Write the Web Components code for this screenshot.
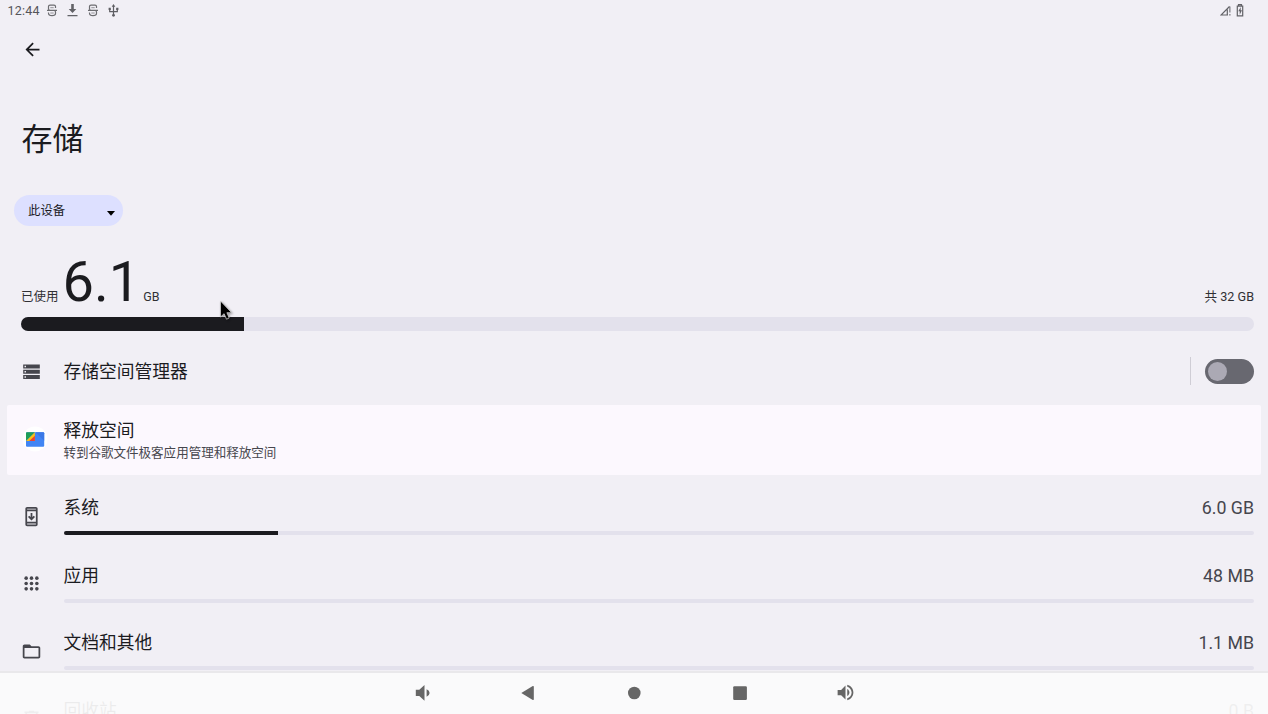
<!DOCTYPE html>
<html lang="zh-CN">
<head>
<meta charset="utf-8">
<title>存储</title>
<style>
html,body{margin:0;height:100%;overflow:hidden;background:#f1eff5}
body{font-family:Roboto,"Noto Sans CJK SC",sans-serif;color:#1b1b1f}
</style>
</head>
<body>
<storage-screen></storage-screen>
<script>
const ICONS = {
  storage: '<svg viewBox="0 0 24 24" width="21" height="21"><path d="M2.500 20.500h19v-4.600h-19v4.600zm1.500-3h1.700v1.700H4v-1.700zM2.500 4v4.600h19V4h-19zm3.200 3.200H4V5.500h1.700v1.700zM2.500 14.500h19V10h-19v4.500zM4 11.400h1.700v1.700H4v-1.700z"/></svg>',
  system: '<svg viewBox="0 0 24 24" width="21" height="21"><path d="M17 1.010L7 1c-1.100 0-2 .9-2 2v18c0 1.100.9 2 2 2h10c1.100 0 2-.9 2-2V3c0-1.100-.9-1.990-2-1.990zM17 21H7v-1h10v1zm0-3H7V6h10v12zM17 4H7V3h10v1zm-1 8.500l-4 4-4-4 1.410-1.410L11 12.670V8h2v4.670l1.590-1.580z"/></svg>',
  apps: '<svg viewBox="0 0 24 24" width="21" height="21"><g><circle cx="5.900" cy="5.900" r="2.050"/><circle cx="12" cy="5.900" r="2.050"/><circle cx="18.100" cy="5.900" r="2.050"/><circle cx="5.900" cy="12" r="2.050"/><circle cx="12" cy="12" r="2.050"/><circle cx="18.100" cy="12" r="2.050"/><circle cx="5.900" cy="18.100" r="2.050"/><circle cx="12" cy="18.100" r="2.050"/><circle cx="18.100" cy="18.100" r="2.050"/></g></svg>',
  folder: '<svg viewBox="0 0 24 24" width="21" height="21"><path d="M20 6h-8l-2-2H4c-1.100 0-1.990.9-1.990 2L2 18c0 1.100.9 2 2 2h16c1.100 0 2-.9 2-2V8c0-1.100-.9-2-2-2zm0 12H4V8h16v10z"/></svg>',
  trash: '<svg viewBox="0 0 24 24" width="21" height="21"><path d="M15 4V3H9v1H4v2h1v13c0 1.100.9 2 2 2h10c1.100 0 2-.9 2-2V6h1V4h-5zm2 15H7V6h10v13zM9 8h2v9H9V8zm4 0h2v9h-2V8z"/></svg>',
  files: '<svg viewBox="0 0 26 26" width="26" height="26"><circle cx="13" cy="13" r="12.500" fill="#fff"/><rect x="4" y="6.300" width="18.200" height="14.500" rx="1" fill="#4285f4"/><path d="M13.300 6.300H21.200q1 0 1 1v7.500z" fill="#3b78e7"/><path d="M4 14.800V7.300q0-1 1-1h8z" fill="#1e9e58"/><path d="M4.100 15 12.900 6.300V15z" fill="#fbc116"/><path d="M7.200 15l5.700-5.200V15z" fill="#e94335"/></svg>'
};
const define = (name, css, html) => customElements.define(name, class extends HTMLElement {
  constructor() {
    super();
    this.attachShadow({ mode: 'open' });
  }
  connectedCallback() {
    this.shadowRoot.innerHTML = `<style>:host{display:block;box-sizing:border-box}*{box-sizing:border-box}svg{display:block;flex:none}${css}</style>` +
      (typeof html === 'function' ? html(this) : html);
  }
});

define('ui-icon', ':host{display:block;fill:#46464d}', el => ICONS[el.getAttribute('name')]);

define('status-bar', `
:host{display:flex;height:22px;align-items:flex-start;padding:0 24.500px 0 7.500px;font-size:12.500px;color:#55555a;letter-spacing:.2px}
.left{display:flex;align-items:center;flex:1;height:21px}
.right{display:flex;gap:3.500px;height:20px;align-items:center}`, () => {
  const s = `<svg width="10" height="13" viewBox="0 0 10 13" fill="none" stroke="#6c6c70" stroke-width="1.200"><path d="M8.500 4V2.600Q8.500 1.100 7 1.100H3Q1.500 1.100 1.500 2.600V4.800Q1.500 6.300 3 6.300H7Q8.500 6.300 8.500 8V9.500Q8.500 11.700 5 11.700T1.500 9.300V8.500M0 6.300H10"/><path d="M3.300 3.700H6.700M3.300 9H6.700" stroke-width=".7"/></svg>`;
  return `<div class="left"><span style="width:39px">12:44</span>${s}
<svg style="margin-left:10px" width="11" height="13" viewBox="0 0 11 13" fill="#626267"><path d="M4.200 0h2.600v5H9.300L5.500 9 1.700 5H4.200zM.5 11h10v1.300H.5z"/></svg>
<span style="width:10px"></span>${s}
<svg style="margin-left:10px" width="11" height="13" viewBox="0 0 11 13"><path d="M5.500 2V11M1.700 5V7.600H5.500M9.300 4.500V7.600H5.500" fill="none" stroke="#5e5e63" stroke-width="1.200"/><path d="M5.500 0 7.300 2.700H3.700zM.6 3.800H2.800V6H.6zM8.200 3.800h2.200V6H8.200z" fill="#5e5e63"/><circle cx="5.500" cy="11.300" r="1.400" fill="#5e5e63"/></svg></div>
<div class="right"><svg width="12" height="13" viewBox="0 0 12 13" fill="none" stroke="#626267"><path d="M8 11H1L9.500 2.500M7.300 5.500V11" stroke-width="1.200"/><path d="M9.900 2.500V8.500M9.900 10V11.600" stroke-width="1"/></svg>
<svg width="8" height="13" viewBox="0 0 8 13"><path d="M2.500 1.600V.6h3v1M1.300 2.100H6.700V11.800H1.300z" fill="none" stroke="#626267" stroke-width="1.200"/><path d="M4.700 3 2.300 7.300H3.700V10.800L6 6.300H4.700z" fill="#626267"/></svg></div>`;
});

define('app-bar', ':host{display:flex;height:55px;align-items:center;padding-left:21.500px}',
  `<svg viewBox="0 0 24 24" width="21" height="21" fill="#1b1b1f"><path d="M20 11H7.830l5.590-5.590L12 4l-8 8 8 8 1.410-1.410L7.830 13H20v-2z"/></svg>`);

define('page-title', ':host{height:117.500px;padding:39px 0 0 21.500px;font-size:31px;line-height:48px}', '<slot></slot>');

define('device-picker', `
:host{display:flex;width:109px;height:31.500px;margin-left:14px;padding:0 8px 0 14px;border-radius:16px;background:#dde0ff;align-items:center;justify-content:space-between;font-size:12.400px;color:#1b1b1f}
svg{margin-top:6px}`, `<slot></slot><svg width="8" height="5" viewBox="0 0 8 5"><path d="M0 0H8L4 4.700z"/></svg>`);

define('usage-summary', `
:host{padding:24px 14px 0 21px;height:105px}
.line{display:flex;align-items:baseline;height:67px;line-height:64px;font-size:12.500px;color:#303034}
b{font-weight:400;font-size:56px;color:#1b1b1f;margin:0 3px 0 4px}
.total{margin-left:auto;font-size:12.600px}
.bar{height:14px;border-radius:7px;background:#e3e1ec;overflow:hidden}
.bar i{display:block;height:14px;width:223px;background:#1b1b1f}`,
`<div class="line"><span>已使用</span><b>6.1</b><span>GB</span><span class="total">共 32 GB</span></div><div class="bar"><i></i></div>`);

define('manager-row', `
:host{display:flex;align-items:center;height:74px;padding:6px 14px 0 21px;font-size:17.750px}
.t{margin:-2px 0 0 21.500px;flex:1}
.sep{width:1px;height:28px;background:#cfcdd5;margin-right:14px}
.switch{width:49px;height:25px;border-radius:13px;background:#686870;padding:3px}
.switch i{display:block;width:19px;height:19px;border-radius:50%;background:#aba9b4}`,
`<ui-icon name="storage"></ui-icon><span class="t"><slot></slot></span><span class="sep"></span><span class="switch"><i></i></span>`);

define('free-card', `
:host{display:flex;align-items:center;height:70px;margin:0 7px;padding-left:15px;background:#fcf8fe;border-radius:2px}
ui-icon{margin-top:-2px}
.text{margin:1px 0 0 15.500px}
.t{font-size:17.750px;line-height:24px}
.s{font-size:12.530px;line-height:19px;color:#46464d}`,
`<ui-icon name="files"></ui-icon><div class="text"><div class="t"><slot></slot></div><div class="s"><slot name="summary"></slot></div></div>`);

define('category-row', `
:host{display:flex;height:67.500px;padding:0 14px 0 21px}
ui-icon{margin-top:23.500px;height:21px}
.body{flex:1;margin-left:21.500px}
.line{display:flex;justify-content:space-between;font-size:17.750px;height:49px;line-height:26px;padding-top:13px}
.v{color:#46464d}
.bar{height:4px;border-radius:2px;background:#e3e1ec;overflow:hidden}
.bar i{display:block;height:4px;background:#1b1b1f}`,
el => `<ui-icon name="${el.getAttribute('icon')}"></ui-icon><div class="body"><div class="line"><span><slot></slot></span><span class="v">${el.getAttribute('value')}</span></div><div class="bar"><i style="width:${el.getAttribute('used') || 0}%"></i></div></div>`);

define('nav-bar', `
:host{position:absolute;left:0;right:0;bottom:0;height:43px;padding-bottom:1.500px;border-top:2px solid #e9e8eb;background:rgba(251,251,251,.935);display:flex;justify-content:center}
span{width:105.600px;display:flex;justify-content:center;align-items:center}
svg{fill:#666}`, `
<span><svg width="20" height="20" viewBox="0 0 20 20"><path d="M2.800 6.800H6.300L11.500 2V17.800L6.300 13H2.800zM13.600 6.200Q16.600 7.500 16.600 9.900T13.600 13.700z"/></svg></span>
<span><svg width="20" height="20" viewBox="0 0 20 20"><path d="M3.300 10 14.800 3.100Q15.800 2.600 15.800 3.700V16.300Q15.800 17.400 14.800 16.900z"/></svg></span>
<span><svg width="20" height="20" viewBox="0 0 20 20"><circle cx="10.300" cy="10" r="6.300"/></svg></span>
<span><svg width="20" height="20" viewBox="0 0 20 20"><rect x="3.200" y="3.200" width="13.700" height="13.700" rx="1.200"/></svg></span>
<span><svg width="21" height="21" viewBox="0 0 24 24"><path d="M3 9v6h4l5 5V4L7 9H3zm13.500 3c0-1.770-1.020-3.290-2.500-4.030v8.050c1.480-.73 2.500-2.250 2.500-4.020zM14 3.230v2.060c2.890.86 5 3.540 5 6.710s-2.110 5.850-5 6.710v2.060c4.010-.91 7-4.490 7-8.770s-2.990-7.860-7-8.770z"/></svg></span>`);

define('mouse-pointer', ':host{position:absolute;left:219px;top:299px}svg{filter:drop-shadow(1px 1.500px 1px #0006)}',
  `<svg width="16" height="23" viewBox="0 0 16 23"><path d="M1.500 2V18L5.100 14.700 7.500 20.200 10.200 19 7.900 13.700H12.600z" fill="#000" stroke="#ddd" stroke-width=".7"/></svg>`);

define('storage-screen', ':host{position:relative;height:714px;overflow:hidden;background:#f1eff5}main{height:714px;overflow:hidden}free-card{margin-bottom:7px}', `
<main><status-bar></status-bar><app-bar></app-bar><page-title>存储</page-title><device-picker>此设备</device-picker>
<usage-summary></usage-summary><manager-row>存储空间管理器</manager-row>
<free-card>释放空间<span slot="summary">转到谷歌文件极客应用管理和释放空间</span></free-card>
<category-row icon="system" value="6.0 GB" used="18">系统</category-row>
<category-row icon="apps" value="48 MB">应用</category-row>
<category-row icon="folder" value="1.1 MB">文档和其他</category-row>
<category-row icon="trash" value="0 B">回收站</category-row></main>
<nav-bar></nav-bar><mouse-pointer></mouse-pointer>`);
</script>
</body>
</html>
